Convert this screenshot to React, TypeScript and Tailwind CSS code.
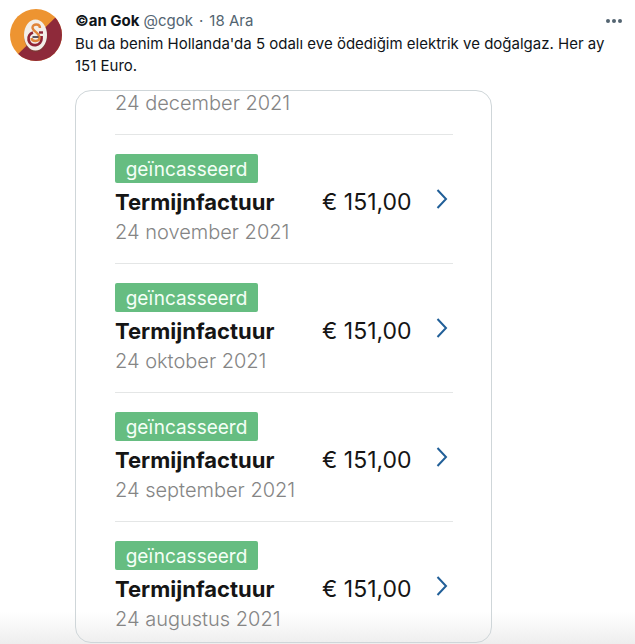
const invoices = ["24 november 2021", "24 oktober 2021", "24 september 2021", "24 augustus 2021"];

function Avatar() {
  return (
    <svg viewBox="0 0 52 52" className="size-[52px] shrink-0" role="img" aria-label="©an Gok">
      <defs>
        <clipPath id="disc">
          <circle cx="26" cy="26" r="26" />
        </clipPath>
      </defs>
      <g clipPath="url(#disc)">
        <rect width="52" height="52" fill="#ed9431" />
        <path d="M52 2 L4 49 L8 52 H52 Z" fill="#8e2a3a" />
      </g>
      <ellipse cx="25.5" cy="27.5" rx="11.5" ry="15.5" fill="#6f4331" opacity="0.5" />
      <ellipse cx="25.5" cy="26" rx="11.5" ry="15.5" fill="#f3efe9" />
      <path d="M23 23.5 A6.5 6.5 0 1 0 31.5 29.5 V28.5 H28.5" fill="none" stroke="#8f2436" strokeWidth="2.8" />
      <path d="M29 23.5 H33" stroke="#8f2436" strokeWidth="2.4" />
      <path d="M30 19 C30 14.5 22.5 14.5 22.5 18.5 C22.5 22.5 29.5 23.5 29.5 28.5 C29.5 33 22 33 21.5 29" fill="none" stroke="#e0853a" strokeWidth="2.4" />
      <path d="M22.5 28 H28.5" stroke="#4b4351" strokeWidth="1.8" />
    </svg>
  );
}

function InvoiceRow({ date }: { date: string }) {
  return (
    <li className="border-b border-[#e4e6e6] pt-[19px] pb-4 last:border-b-0 last:pb-2">
      <span className="flex h-[29px] w-[143px] items-center justify-center rounded-xs bg-[#66bd81] pt-1 text-[19px] text-[#f4fff6]">
        geïncasseerd
      </span>
      <div className="mt-1 flex h-[30px] items-center">
        <h3 className="w-[207px] text-[22px] font-bold text-[#151515]">Termijnfactuur</h3>
        <span className="flex-1 whitespace-nowrap text-[23px] text-[#151515]">€ 151,00</span>
        <button type="button" aria-label={`Termijnfactuur ${date}`} className="mr-[5px] mb-1.5">
          <svg viewBox="0 0 12 22" className="h-[22px] w-3" fill="none" stroke="#215f98" strokeWidth="2">
            <path d="M1.5 2 L10 11 L1.5 20" />
          </svg>
        </button>
      </div>
      <p className="text-xl leading-[30px] font-light text-[#858585]">{date}</p>
    </li>
  );
}

export default function App() {
  return (
    <main className="min-h-screen bg-[linear-gradient(to_top,#eeeeee,#ffffff_32px)] font-['Inter','Liberation_Sans',sans-serif]">
      <article className="flex gap-[13px] pt-[9px] pr-3 pl-[10px]">
        <Avatar />
        <div className="min-w-0 flex-1">
          <header className="flex h-6 items-center text-[15px] text-[#536471]">
            <a href="#profile" className="font-bold text-[#0f1419]">©an Gok</a>
            <a href="#profile" className="ml-1">@cgok</a>
            <span className="mx-1.5">·</span>
            <time>18 Ara</time>
            <button type="button" aria-label="Daha fazla" className="ml-auto">
              <svg viewBox="0 0 18 6" className="h-1.5 w-[18px]" fill="#536471">
                <circle cx="3" cy="3" r="2" />
                <circle cx="9" cy="3" r="2" />
                <circle cx="15" cy="3" r="2" />
              </svg>
            </button>
          </header>
          <p className="text-[15px] leading-[22px] text-[#0f1419]">
            Bu da benim Hollanda'da 5 odalı eve ödediğim elektrik ve doğalgaz. Her ay 151 Euro.
          </p>
          <section className="mt-[13px] max-w-[417px] overflow-hidden rounded-2xl border border-[#cfd6d9] pr-[38px] pl-[39px]">
            <p className="border-b border-[#e4e6e6] pb-[19px] text-xl leading-6 font-light text-[#858585]">24 december 2021</p>
            <ul>
              {invoices.map((date) => (
                <InvoiceRow key={date} date={date} />
              ))}
            </ul>
          </section>
        </div>
      </article>
    </main>
  );
}
